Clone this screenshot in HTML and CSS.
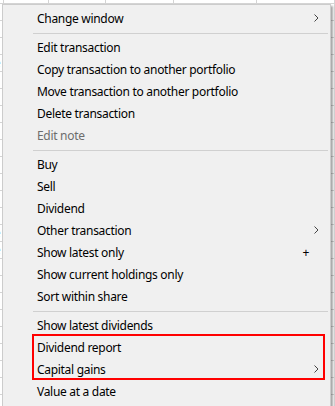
FILE: index.html
```html
<!DOCTYPE html>
<html lang="en">

<head>
    <meta charset="UTF-8">
    <meta name="viewport" content="width=device-width, initial-scale=1.0">
    <title>Portfolio - context menu</title>
    <link rel="stylesheet" href="styles.css">
</head>

<body>

    <!-- transaction grid behind the menu -->
    <table class="grid">
        <tr><td>Dividend</td><td></td><td>0.743</td><td>3413.00</td><td>0.743</td><td>Is</td></tr>
        <tr><td>Dividend</td><td></td><td></td><td></td><td></td><td></td></tr>
        <tr><td>Dividend</td><td></td><td></td><td></td><td></td><td></td></tr>
        <tr><td>Dividend</td><td></td><td></td><td></td><td></td><td></td></tr>
        <tr><td>Trade</td><td></td><td></td><td></td><td></td><td>Is</td></tr>
        <tr><td>Dividend</td><td></td><td></td><td></td><td></td><td></td></tr>
        <tr><td>Dividend</td><td></td><td></td><td></td><td></td><td></td></tr>
        <tr><td>Dividend</td><td></td><td></td><td></td><td></td><td></td></tr>
        <tr><td>Dividend</td><td></td><td></td><td></td><td></td><td></td></tr>
        <tr><td>Dividend</td><td></td><td></td><td></td><td></td><td></td></tr>
        <tr><td>Dividend</td><td></td><td></td><td></td><td></td><td></td></tr>
        <tr><td>Dividend</td><td></td><td></td><td></td><td></td><td></td></tr>
        <tr><td>Dividend</td><td></td><td></td><td></td><td></td><td></td></tr>
        <tr><td>Dividend</td><td></td><td></td><td></td><td></td><td></td></tr>
        <tr><td>Trade</td><td></td><td></td><td></td><td></td><td></td></tr>
        <tr><td>Trade</td><td></td><td></td><td></td><td></td><td></td></tr>
        <tr><td>Dividend</td><td></td><td></td><td></td><td></td><td></td></tr>
        <tr><td>Dividend</td><td></td><td></td><td></td><td></td><td></td></tr>
        <tr><td>Dividend</td><td></td><td></td><td></td><td></td><td></td></tr>
        <tr><td>Dividend</td><td></td><td></td><td></td><td></td><td></td></tr>
        <tr><td>Dividend</td><td></td><td></td><td></td><td></td><td></td></tr>
        <tr><td>Dividend</td><td></td><td></td><td></td><td></td><td></td></tr>
        <tr><td>Dividend</td><td></td><td></td><td></td><td></td><td></td></tr>
        <tr><td>Dividend</td><td></td><td></td><td></td><td></td><td></td></tr>
        <tr><td>Dividend</td><td></td><td></td><td></td><td></td><td></td></tr>
    </table>

    <!-- context menu -->
    <div class="menu">
        <div class="item">
            <span class="label">Change window</span>
            <svg class="arrow" width="5" height="8" viewBox="0 0 5 8"><path d="M0.5 0.5 L4 4 L0.5 7.5" /></svg>
        </div>
        <div class="sep"></div>
        <div class="item"><span class="label">Edit transaction</span></div>
        <div class="item"><span class="label">Copy transaction to another portfolio</span></div>
        <div class="item"><span class="label">Move transaction to another portfolio</span></div>
        <div class="item"><span class="label">Delete transaction</span></div>
        <div class="item disabled"><span class="label">Edit note</span></div>
        <div class="sep"></div>
        <div class="item"><span class="label">Buy</span></div>
        <div class="item"><span class="label">Sell</span></div>
        <div class="item"><span class="label">Dividend</span></div>
        <div class="item">
            <span class="label">Other transaction</span>
            <svg class="arrow" width="5" height="8" viewBox="0 0 5 8"><path d="M0.5 0.5 L4 4 L0.5 7.5" /></svg>
        </div>
        <div class="item">
            <span class="label">Show latest only</span>
            <span class="key">+</span>
        </div>
        <div class="item"><span class="label">Show current holdings only</span></div>
        <div class="item"><span class="label">Sort within share</span></div>
        <div class="sep"></div>
        <div class="item"><span class="label">Show latest dividends</span></div>
        <div class="highlight">
            <div class="item"><span class="label">Dividend report</span></div>
            <div class="item">
                <span class="label">Capital gains</span>
                <svg class="arrow" width="5" height="8" viewBox="0 0 5 8"><path d="M0.5 0.5 L4 4 L0.5 7.5" /></svg>
            </div>
        </div>
        <div class="item"><span class="label">Value at a date</span></div>
    </div>

</body>

</html>
```

FILE: styles.css
```css
body {
    margin: 0;
    padding: 0;
    width: 335px;
    height: 406px;
    overflow: hidden;
    position: relative;
    background-color: #fff;
    font-family: 'Noto Sans', 'Open Sans', sans-serif;
    font-size: 12px;
}

/* grid in the background */
.grid {
    border-collapse: collapse;
    margin-top: -14px;
    margin-left: -57px;
    table-layout: fixed;
    color: #1a1a1a;
    font-size: 12px;
}

.grid td {
    height: 16px;
    padding: 0 3px;
    border: 1px solid #d4d4d4;
    text-align: right;
    white-space: nowrap;
    overflow: hidden;
    line-height: 16px;
}

.grid td:nth-child(1) { width: 54px; }
.grid td:nth-child(2) { width: 43px; }
.grid td:nth-child(3) { width: 53px; }
.grid td:nth-child(4) { width: 63px; }
.grid td:nth-child(5) { width: 83px; }
.grid td:nth-child(6) { width: 80px; text-align: left; color: #1b4f9c; }

/* context menu */
.menu {
    position: absolute;
    left: 2px;
    top: 4px;
    width: 327px;
    padding: 2px 0 8px;
    background-color: #f0f0f0;
    border: 1px solid #cccccc;
    box-shadow: 2px 2px 2px rgba(0, 0, 0, 0.35);
    color: #000;
    letter-spacing: -0.3px;
}

.item {
    display: flex;
    align-items: center;
    height: 22px;
    padding-left: 34px;
    padding-right: 11px;
    white-space: nowrap;
}

.item .label {
    flex: 1;
}

.item.disabled {
    color: #6d6d6d;
}

.item .key {
    margin-right: 10px;
}

.arrow {
    display: block;
}

.arrow path {
    fill: none;
    stroke: #444;
    stroke-width: 1;
}

.sep {
    height: 1px;
    margin: 4px 2px 2px 30px;
    background-color: #d0d0d0;
}

.highlight {
    position: relative;
}

.highlight::after {
    content: '';
    position: absolute;
    top: -2px;
    bottom: 0;
    left: 29px;
    right: 5px;
    border: 2px solid #ff0000;
    pointer-events: none;
}
```
